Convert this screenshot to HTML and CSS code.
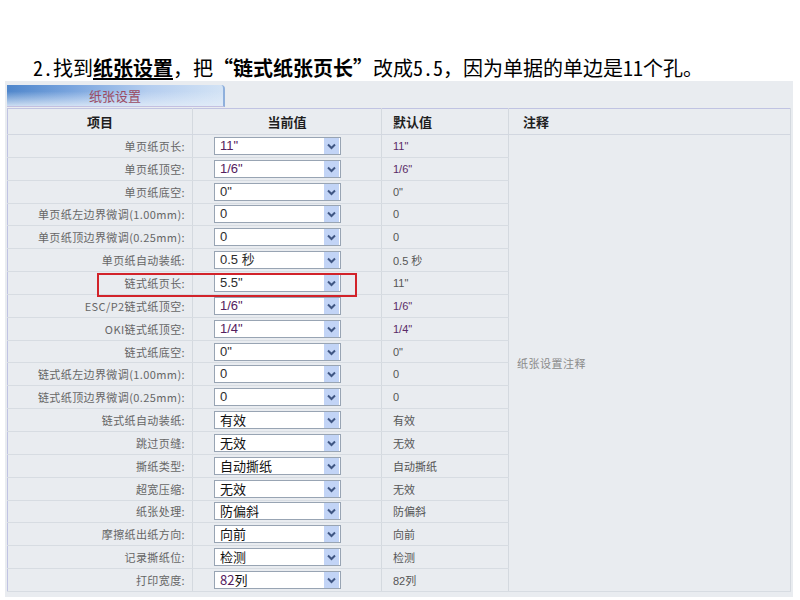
FILE: index.html
```html
<!DOCTYPE html>
<html lang="zh-CN">
<head>
<meta charset="utf-8">
<title>纸张设置</title>
<link rel="stylesheet" href="styles.css">
</head>
<body>
<p class="title">2.找到<b class="u">纸张设置</b>，把<b>“链式纸张页长”</b>改成5.5，因为单据的单边是11个孔。</p>
<div class="panel">
  <div class="tab">纸张设置</div>
  <table class="grid">
    <colgroup><col class="c1"><col class="c2"><col class="c3"><col class="c4"></colgroup>
    <thead>
      <tr><th class="h-c">项目</th><th class="h-c">当前值</th><th class="h-l">默认值</th><th class="h-l h-note">注释</th></tr>
    </thead>
    <tbody>
      <tr><td class="lbl">单页纸页长:</td><td class="cur"><span class="sel"><span class="val pur">11"</span><span class="arw"><svg viewBox="0 0 15 16" width="15" height="16"><path d="M4 6.5 L7.5 10 L11 6.5" fill="none" stroke="#3f5683" stroke-width="2"/></svg></span></span></td><td class="def pur">11"</td><td class="note" rowspan="20">纸张设置注释</td></tr>
      <tr><td class="lbl">单页纸顶空:</td><td class="cur"><span class="sel"><span class="val pur">1/6"</span><span class="arw"><svg viewBox="0 0 15 16" width="15" height="16"><path d="M4 6.5 L7.5 10 L11 6.5" fill="none" stroke="#3f5683" stroke-width="2"/></svg></span></span></td><td class="def pur">1/6"</td></tr>
      <tr><td class="lbl">单页纸底空:</td><td class="cur"><span class="sel"><span class="val">0"</span><span class="arw"><svg viewBox="0 0 15 16" width="15" height="16"><path d="M4 6.5 L7.5 10 L11 6.5" fill="none" stroke="#3f5683" stroke-width="2"/></svg></span></span></td><td class="def">0"</td></tr>
      <tr><td class="lbl">单页纸左边界微调(1.00mm):</td><td class="cur"><span class="sel"><span class="val">0</span><span class="arw"><svg viewBox="0 0 15 16" width="15" height="16"><path d="M4 6.5 L7.5 10 L11 6.5" fill="none" stroke="#3f5683" stroke-width="2"/></svg></span></span></td><td class="def">0</td></tr>
      <tr><td class="lbl">单页纸顶边界微调(0.25mm):</td><td class="cur"><span class="sel"><span class="val">0</span><span class="arw"><svg viewBox="0 0 15 16" width="15" height="16"><path d="M4 6.5 L7.5 10 L11 6.5" fill="none" stroke="#3f5683" stroke-width="2"/></svg></span></span></td><td class="def">0</td></tr>
      <tr><td class="lbl">单页纸自动装纸:</td><td class="cur"><span class="sel"><span class="val">0.5 秒</span><span class="arw"><svg viewBox="0 0 15 16" width="15" height="16"><path d="M4 6.5 L7.5 10 L11 6.5" fill="none" stroke="#3f5683" stroke-width="2"/></svg></span></span></td><td class="def">0.5 秒</td></tr>
      <tr><td class="lbl">链式纸页长:</td><td class="cur"><span class="sel"><span class="val">5.5"</span><span class="arw"><svg viewBox="0 0 15 16" width="15" height="16"><path d="M4 6.5 L7.5 10 L11 6.5" fill="none" stroke="#3f5683" stroke-width="2"/></svg></span></span></td><td class="def">11"</td></tr>
      <tr><td class="lbl">ESC/P2链式纸顶空:</td><td class="cur"><span class="sel"><span class="val pur">1/6"</span><span class="arw"><svg viewBox="0 0 15 16" width="15" height="16"><path d="M4 6.5 L7.5 10 L11 6.5" fill="none" stroke="#3f5683" stroke-width="2"/></svg></span></span></td><td class="def pur">1/6"</td></tr>
      <tr><td class="lbl">OKI链式纸顶空:</td><td class="cur"><span class="sel"><span class="val pur">1/4"</span><span class="arw"><svg viewBox="0 0 15 16" width="15" height="16"><path d="M4 6.5 L7.5 10 L11 6.5" fill="none" stroke="#3f5683" stroke-width="2"/></svg></span></span></td><td class="def pur">1/4"</td></tr>
      <tr><td class="lbl">链式纸底空:</td><td class="cur"><span class="sel"><span class="val">0"</span><span class="arw"><svg viewBox="0 0 15 16" width="15" height="16"><path d="M4 6.5 L7.5 10 L11 6.5" fill="none" stroke="#3f5683" stroke-width="2"/></svg></span></span></td><td class="def">0"</td></tr>
      <tr><td class="lbl">链式纸左边界微调(1.00mm):</td><td class="cur"><span class="sel"><span class="val">0</span><span class="arw"><svg viewBox="0 0 15 16" width="15" height="16"><path d="M4 6.5 L7.5 10 L11 6.5" fill="none" stroke="#3f5683" stroke-width="2"/></svg></span></span></td><td class="def">0</td></tr>
      <tr><td class="lbl">链式纸顶边界微调(0.25mm):</td><td class="cur"><span class="sel"><span class="val">0</span><span class="arw"><svg viewBox="0 0 15 16" width="15" height="16"><path d="M4 6.5 L7.5 10 L11 6.5" fill="none" stroke="#3f5683" stroke-width="2"/></svg></span></span></td><td class="def">0</td></tr>
      <tr><td class="lbl">链式纸自动装纸:</td><td class="cur"><span class="sel"><span class="val cjk">有效</span><span class="arw"><svg viewBox="0 0 15 16" width="15" height="16"><path d="M4 6.5 L7.5 10 L11 6.5" fill="none" stroke="#3f5683" stroke-width="2"/></svg></span></span></td><td class="def">有效</td></tr>
      <tr><td class="lbl">跳过页缝:</td><td class="cur"><span class="sel"><span class="val cjk">无效</span><span class="arw"><svg viewBox="0 0 15 16" width="15" height="16"><path d="M4 6.5 L7.5 10 L11 6.5" fill="none" stroke="#3f5683" stroke-width="2"/></svg></span></span></td><td class="def">无效</td></tr>
      <tr><td class="lbl">撕纸类型:</td><td class="cur"><span class="sel"><span class="val cjk">自动撕纸</span><span class="arw"><svg viewBox="0 0 15 16" width="15" height="16"><path d="M4 6.5 L7.5 10 L11 6.5" fill="none" stroke="#3f5683" stroke-width="2"/></svg></span></span></td><td class="def">自动撕纸</td></tr>
      <tr><td class="lbl">超宽压缩:</td><td class="cur"><span class="sel"><span class="val cjk">无效</span><span class="arw"><svg viewBox="0 0 15 16" width="15" height="16"><path d="M4 6.5 L7.5 10 L11 6.5" fill="none" stroke="#3f5683" stroke-width="2"/></svg></span></span></td><td class="def">无效</td></tr>
      <tr><td class="lbl">纸张处理:</td><td class="cur"><span class="sel"><span class="val cjk">防偏斜</span><span class="arw"><svg viewBox="0 0 15 16" width="15" height="16"><path d="M4 6.5 L7.5 10 L11 6.5" fill="none" stroke="#3f5683" stroke-width="2"/></svg></span></span></td><td class="def">防偏斜</td></tr>
      <tr><td class="lbl">摩擦纸出纸方向:</td><td class="cur"><span class="sel"><span class="val cjk">向前</span><span class="arw"><svg viewBox="0 0 15 16" width="15" height="16"><path d="M4 6.5 L7.5 10 L11 6.5" fill="none" stroke="#3f5683" stroke-width="2"/></svg></span></span></td><td class="def">向前</td></tr>
      <tr><td class="lbl">记录撕纸位:</td><td class="cur"><span class="sel"><span class="val cjk">检测</span><span class="arw"><svg viewBox="0 0 15 16" width="15" height="16"><path d="M4 6.5 L7.5 10 L11 6.5" fill="none" stroke="#3f5683" stroke-width="2"/></svg></span></span></td><td class="def">检测</td></tr>
      <tr><td class="lbl">打印宽度:</td><td class="cur"><span class="sel"><span class="val cjk"><span class="pur">82</span>列</span><span class="arw"><svg viewBox="0 0 15 16" width="15" height="16"><path d="M4 6.5 L7.5 10 L11 6.5" fill="none" stroke="#3f5683" stroke-width="2"/></svg></span></span></td><td class="def">82列</td></tr>
    </tbody>
  </table>
  <div class="mark"></div>
</div>
</body>
</html>
```

FILE: styles.css
```css
html, body {
  margin: 0;
  background: #ffffff;
}
body {
  padding-top: 56px;
  font-family: "Liberation Sans", "Noto Sans CJK SC", sans-serif;
}
.title {
  margin: 0 0 0 33px;
  height: 24px;
  font-family: "Noto Sans Mono CJK SC", "Noto Sans CJK SC", sans-serif;
  font-size: 20px;
  line-height: 24px;
  color: #000;
  white-space: nowrap;
}
.title b {
  font-weight: 700;
}
.title .u {
  text-decoration: underline;
  text-underline-offset: 2px;
}
.panel {
  position: relative;
  box-sizing: border-box;
  margin: 1px 0 0 5px;
  width: 788px;
  height: 516px;
  padding: 4px 0 0 2px;
  background: #e9ecf0;
}
.tab {
  box-sizing: border-box;
  width: 218px;
  height: 22px;
  display: flex;
  align-items: center;
  justify-content: center;
  font-family: "Noto Sans CJK SC", sans-serif;
  font-size: 13px;
  color: #9b4a62;
  border-right: 2px solid #8fb0dc;
  border-bottom: 1px solid #c4c0e0;
  border-top-right-radius: 4px;
  background:
    linear-gradient(to bottom, rgba(255,255,255,0) 0%, rgba(255,255,255,0) 30%, rgba(226,236,248,0.85) 100%),
    linear-gradient(to right, #4f86cb 0%, #7aa5de 30%, #b4cdef 65%, #d3e3f5 100%);
}
.grid {
  margin-top: 1px;
  width: 783px;
  table-layout: fixed;
  border-collapse: collapse;
  border: 1px solid #c0c3e2;
  background: #e9ecf0;
}
.c1 { width: 185px; }
.c2 { width: 189px; }
.c3 { width: 127px; }
.c4 { width: 282px; }
th {
  height: 25px;
  padding: 0;
  font-family: "Noto Sans CJK SC", sans-serif;
  font-size: 13px;
  font-weight: 700;
  color: #1e1e1e;
  border-bottom: 1px solid #d2d7e0;
  border-right: 1px solid #d4d9df;
}
.h-c { text-align: center; }
.h-l { text-align: left; padding-left: 11px; }
.h-note { padding-left: 14px; }
td {
  height: 21.85px;
  padding: 0;
  border-bottom: 1px solid #d7dce2;
  border-right: 1px solid #d4d9df;
  white-space: nowrap;
}
.lbl {
  text-align: right;
  padding-right: 7px;
  font-family: "Noto Sans CJK SC", sans-serif;
  font-size: 11px;
  color: #666;
  letter-spacing: 0.4px;
}
.cur {
  padding-left: 21px;
}
.sel {
  box-sizing: border-box;
  display: flex;
  align-items: center;
  width: 127px;
  height: 18px;
  border: 1px solid #98a4b3;
  background: #ffffff;
}
.val {
  flex: 1;
  padding-left: 5px;
  font-size: 13px;
  line-height: 16px;
  color: #2d2d2d;
}
.val.cjk {
  font-family: "Noto Sans CJK SC", sans-serif;
  font-size: 13px;
  color: #111;
}
.arw {
  display: flex;
  width: 15px;
  height: 16px;
  margin-right: 1px;
  background: #c2d4f6;
}
.arw svg { display: block; }
.pur { color: #55205e; }
.val.pur { color: #55205e; }
.def {
  padding-left: 11px;
  font-family: "Liberation Sans", "Noto Sans CJK SC", sans-serif;
  font-size: 11px;
  color: #555;
}
.def.pur { color: #5a2a66; }
.note {
  vertical-align: middle;
  padding-left: 8px;
  font-family: "Noto Sans CJK SC", sans-serif;
  font-size: 11px;
  color: #8a8a8a;
  letter-spacing: 0.5px;
}
.mark {
  position: absolute;
  left: 92px;
  top: 192px;
  width: 260px;
  height: 24px;
  box-sizing: border-box;
  border: 2px solid #d2232a;
}
```
